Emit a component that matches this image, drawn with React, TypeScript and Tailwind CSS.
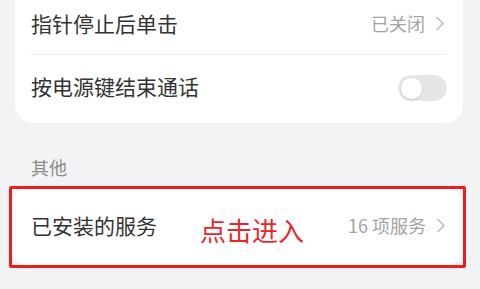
import React from 'react';

const font = { fontFamily: '"Noto Sans CJK SC", "Noto Sans", sans-serif' };

function Chevron() {
  return (
    <svg width="10" height="15" viewBox="0 0 10 15" className="shrink-0">
      <polyline points="2,1.5 8,7.5 2,13.5" fill="none" stroke="#bdbdbd" strokeWidth="1.6" strokeLinecap="round" strokeLinejoin="round" />
    </svg>
  );
}

function Toggle() {
  return (
    <div className="w-[49px] h-[26px] rounded-full bg-[#e6e6e6] flex items-center pl-[3px]">
      <div className="w-[21px] h-[21px] rounded-full bg-white shadow-sm" />
    </div>
  );
}

export default function App() {
  return (
    <div className="w-[480px] h-[289px] bg-[#f2f3f5] overflow-hidden" style={font}>
      {/* 上面的设置卡片 */}
      <div className="ml-[15px] mr-[17px] bg-white rounded-b-[18px] pl-[16px]">
        <div className="h-[54px] pb-[8px] flex items-center pr-[18px]">
          <span className="text-[21px] leading-none text-[#333]">指针停止后单击</span>
          <span className="ml-auto text-[18px] leading-none text-[#a3a3a3] mr-[10px]">已关闭</span>
          <Chevron />
        </div>
        <div className="h-px bg-[#ececec] mr-[16px]" />
        <div className="h-[68px] pb-[5px] flex items-center pr-[16px]">
          <span className="text-[21px] leading-none text-[#333]">按电源键结束通话</span>
          <div className="ml-auto mt-[3px]">
            <Toggle />
          </div>
        </div>
      </div>

      <div className="pl-[31px] pt-[33px] pb-[8px]">
        <div className="h-[22px] flex items-center text-[18px] leading-none text-[#8c8c8c]">其他</div>
      </div>

      {/* 红框标注 */}
      <div className="ml-[9px] mr-[14px] border-[3px] border-[#ee1d1d] rounded-[2px]">
        <div className="h-[76px] pb-[4px] bg-white rounded-[14px] flex items-center pl-[19px] pr-[17px]">
          <span className="text-[21px] leading-none text-[#333]">已安装的服务</span>
          <span className="ml-[43px] mt-[9px] text-[26px] leading-none text-[#e8262a]">点击进入</span>
          <span className="ml-auto text-[18px] leading-none text-[#a3a3a3] mr-[10px]">16 项服务</span>
          <Chevron />
        </div>
      </div>
    </div>
  );
}
